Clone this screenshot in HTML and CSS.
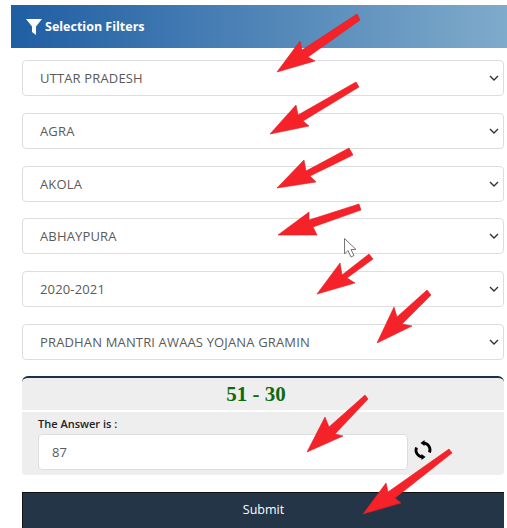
FILE: index.html
```html
<!DOCTYPE html>
<html lang="en">
<head>
  <meta charset="UTF-8" />
  <title>Selection Filters</title>
  <link rel="stylesheet" href="styles.css">
</head>
<body>
  <div class="Page">
    <div class="Header">
      <svg class="FilterIcon" viewBox="0 0 16 16"><path d="M0 0H16L10 7.5V16L6 13V7.5Z"/></svg>
      <span>Selection Filters</span>
    </div>

    <div class="Filters">
      <div class="Select"><span>UTTAR PRADESH</span><svg class="Chevron" viewBox="0 0 10 6"><path d="M1 1L5 5L9 1"/></svg></div>
      <div class="Select"><span>AGRA</span><svg class="Chevron" viewBox="0 0 10 6"><path d="M1 1L5 5L9 1"/></svg></div>
      <div class="Select"><span>AKOLA</span><svg class="Chevron" viewBox="0 0 10 6"><path d="M1 1L5 5L9 1"/></svg></div>
      <div class="Select"><span>ABHAYPURA</span><svg class="Chevron" viewBox="0 0 10 6"><path d="M1 1L5 5L9 1"/></svg></div>
      <div class="Select"><span>2020-2021</span><svg class="Chevron" viewBox="0 0 10 6"><path d="M1 1L5 5L9 1"/></svg></div>
      <div class="Select"><span>PRADHAN MANTRI AWAAS YOJANA GRAMIN</span><svg class="Chevron" viewBox="0 0 10 6"><path d="M1 1L5 5L9 1"/></svg></div>
    </div>

    <div class="Captcha">
      <div class="Sum">51 - 30</div>
      <div class="AnswerBox">
        <div class="AnswerLabel">The Answer is :</div>
        <div class="AnswerRow">
          <div class="AnswerInput">87</div>
          <svg class="Refresh" viewBox="0 0 20 20">
            <path d="M10 3A7 7 0 0 1 16.500 12.600"/>
            <path d="M10 17A7 7 0 0 1 3.500 7.400"/>
            <polygon class="Tip" points="7.500,3 11.500,0 11.500,6"/>
            <polygon class="Tip" points="12.500,17 8.500,14 8.500,20"/>
          </svg>
        </div>
      </div>
    </div>

    <div class="Submit">Submit</div>

    <!-- annotations drawn over the form -->
    <svg class="Arrows" viewBox="0 0 507 528">
      <polygon points="277,72 300,41 302,50 357,14 360,20 308,57 315,61"/>
      <polygon points="270,134 296,105 298,115 356,82 359,87 303,121 309,126"/>
      <polygon points="277,188 304,160 306,171 349,148 353,155 310,176 316,182"/>
      <polygon points="278,235 309,212 309,220 359,204 361,210 313,227 317,235"/>
      <polygon points="317,294 340,263 342,275 369,254 373,259 347,278 355,283"/>
      <polygon points="377,343 394,307 397,317 427,290 431,295 402,324 412,326"/>
      <polygon points="307,452 325,417 329,427 365,395 368,399 335,434 343,436"/>
      <polygon points="363,514 386,483 388,492 449,449 452,453 395,498 401,503"/>
      <path class="Cursor" d="M344.500 238.500V254L348 250.500L351 257L354 255.500L351 249.500H356Z"/>
    </svg>
  </div>
</body>
</html>
```

FILE: styles.css
```css
* {
  margin: 0;
  padding: 0;
  box-sizing: border-box;
}

html, body {
  width: 507px;
  height: 528px;
  overflow: hidden;
  background-color: #fff;
  font-family: "Open Sans", "Liberation Sans", sans-serif;
}

.Page {
  position: relative;
  height: 528px;
  padding-top: 5px;
  padding-left: 11px;
}

.Header {
  display: flex;
  align-items: center;
  gap: 3px;
  height: 43px;
  padding-left: 15px;
  color: #fff;
  font-size: 12.500px;
  font-weight: 700;
  background: linear-gradient(to right, #1f5ea3, #7fabcb);
}

.FilterIcon {
  width: 16px;
  height: 16px;
  fill: #fff;
}

.Filters {
  display: flex;
  flex-direction: column;
  gap: 16.800px;
  margin: 12px 3px 0 11px;
}

.Select {
  display: flex;
  align-items: center;
  justify-content: space-between;
  height: 36px;
  padding: 0 4px 0 17px;
  color: #5a5a5a;
  font-size: 13px;
  letter-spacing: 0.150px;
  background-color: #fff;
  border: 1px solid #ddd;
  border-radius: 4px;
}

.Chevron {
  width: 10px;
  height: 6px;
  fill: none;
  stroke: #333;
  stroke-width: 1.400;
}

.Captcha {
  margin: 16px 3px 0 11px;
}

.Sum {
  height: 34px;
  padding-right: 14px;
  color: #0d6b0d;
  font-family: "Liberation Serif", serif;
  font-size: 21px;
  font-weight: 700;
  line-height: 32px;
  text-align: center;
  background-color: #eee;
  border-top: 2px solid #1c3048;
  border-radius: 6px 6px 0 0;
}

.AnswerBox {
  height: 63px;
  margin-top: 2px;
  padding: 5px 16px 0;
  background-color: #eee;
  border-radius: 0 0 4px 4px;
}

.AnswerLabel {
  color: #222;
  font-size: 11px;
  font-weight: 600;
  line-height: 14px;
}

.AnswerRow {
  display: flex;
  align-items: center;
  gap: 5px;
  margin-top: 3px;
}

.AnswerInput {
  width: 370px;
  height: 36px;
  padding-left: 13px;
  color: #5a5a5a;
  font-size: 13px;
  line-height: 34px;
  background-color: #fff;
  border: 1px solid #ddd;
  border-radius: 4px;
}

.Refresh {
  width: 20px;
  height: 20px;
  margin-bottom: 4px;
  fill: none;
  stroke: #000;
  stroke-width: 2.800;
}

.Refresh .Tip {
  fill: #000;
  stroke: none;
}

.Submit {
  height: 36px;
  margin: 17px 3px 0 11px;
  color: #fff;
  font-size: 12.500px;
  font-weight: 500;
  line-height: 34px;
  text-align: center;
  background-color: #243548;
  border-top: 1px solid #111;
  border-left: 1px solid #111;
}

.Arrows {
  position: absolute;
  top: 0;
  left: 0;
  width: 507px;
  height: 528px;
  fill: #f5222a;
  stroke: #e01c22;
  stroke-width: 0.600;
}

.Arrows .Cursor {
  fill: #fff;
  stroke: #777;
  stroke-width: 1;
}
```
